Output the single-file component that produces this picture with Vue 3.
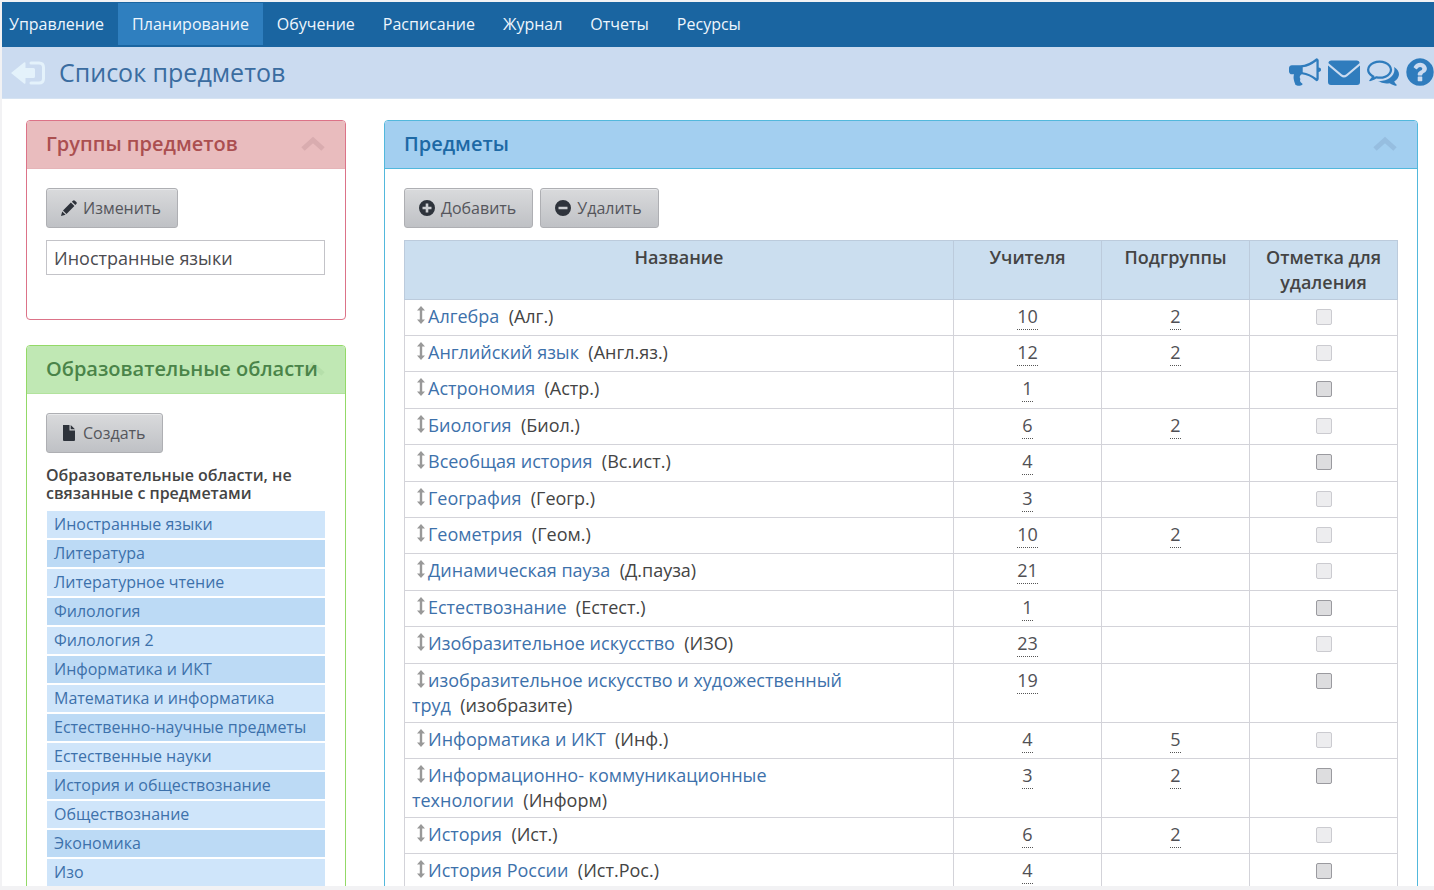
<script setup>
const nav = ['Управление', 'Планирование', 'Обучение', 'Расписание', 'Журнал', 'Отчеты', 'Ресурсы']

const areas = [
  'Иностранные языки',
  'Литература',
  'Литературное чтение',
  'Филология',
  'Филология 2',
  'Информатика и ИКТ',
  'Математика и информатика',
  'Естественно-научные предметы',
  'Естественные науки',
  'История и обществознание',
  'Обществознание',
  'Экономика',
  'Изо',
]

const subjects = [
  { name: 'Алгебра', short: 'Алг.', teachers: 10, groups: 2, free: false },
  { name: 'Английский язык', short: 'Англ.яз.', teachers: 12, groups: 2, free: false },
  { name: 'Астрономия', short: 'Астр.', teachers: 1, free: true },
  { name: 'Биология', short: 'Биол.', teachers: 6, groups: 2, free: false },
  { name: 'Всеобщая история', short: 'Вс.ист.', teachers: 4, free: true },
  { name: 'География', short: 'Геогр.', teachers: 3, free: false },
  { name: 'Геометрия', short: 'Геом.', teachers: 10, groups: 2, free: false },
  { name: 'Динамическая пауза', short: 'Д.пауза', teachers: 21, free: false },
  { name: 'Естествознание', short: 'Естест.', teachers: 1, free: true },
  { name: 'Изобразительное искусство', short: 'ИЗО', teachers: 23, free: false },
  { name: 'изобразительное искусство и художественный труд', short: 'изобразите', teachers: 19, free: true },
  { name: 'Информатика и ИКТ', short: 'Инф.', teachers: 4, groups: 5, free: false },
  { name: 'Информационно- коммуникационные технологии', short: 'Информ', teachers: 3, groups: 2, free: true },
  { name: 'История', short: 'Ист.', teachers: 6, groups: 2, free: false },
  { name: 'История России', short: 'Ист.Рос.', teachers: 4, free: true },
]
</script>

<template>
  <div class="app">
    <div class="page">
      <nav class="nav">
        <a v-for="item in nav" :key="item" href="#" :class="{ active: item === 'Планирование' }">{{ item }}</a>
      </nav>

      <header class="bar">
        <a href="#" class="back" aria-label="Назад">
          <svg viewBox="0 0 34 24" width="34" height="24">
            <path d="M0 12 13 1.500q1.500-1 1.500 1V7h8q1.500 0 1.500 1.500v7q0 1.500-1.500 1.500h-8v4.500q0 2-1.500 1z" fill="currentColor" />
            <path d="M20 2h8q4.500 0 4.500 4.500v11q0 4.500-4.500 4.500h-8" fill="none" stroke="currentColor" stroke-width="3" stroke-linecap="round" />
          </svg>
        </a>
        <h1>Список предметов</h1>
        <div class="tools">
          <a href="#" aria-label="Объявления">
            <svg viewBox="0 0 1792 1792" width="32" height="32"><path fill="currentColor" d="M1664 640q53 0 90.500 37.500t37.500 90.500-37.500 90.500-90.500 37.500v384q0 52-38 90t-90 38q-417-347-812-380-58 19-91 66t-31 100.500 40 92.500q-20 33-23 65.500t6 58 33.500 55 48 50 61.500 50.500q-29 58-111.500 83t-168.500 11.500-132-55.500q-7-23-29.500-87.500t-32-94.500-23-89-15-101 3.500-98.500 22-110.500h-122q-66 0-113-47t-47-113v-192q0-66 47-113t113-47h480q435 0 896-384 52 0 90 38t38 90v384zm-128 604v-954q-394 302-768 343v270q377 42 768 341z" /></svg>
          </a>
          <a href="#" aria-label="Почта">
            <svg viewBox="0 0 32 32" width="32" height="32">
              <path fill="currentColor" d="M3 4.500h26q2.500 0 2.700 2.500L18 18.500q-2 1.500-4 0L.3 7Q.500 4.500 3 4.500z" />
              <path fill="currentColor" d="M0 9.500l12.800 10.800q3.200 2.400 6.400 0L32 9.500V26q0 3-3 3H3q-3 0-3-3z" />
            </svg>
          </a>
          <a href="#" aria-label="Обсуждения">
            <svg viewBox="0 0 1792 1792" width="32" height="32"><path fill="currentColor" d="M704 384q-153 0-286 52t-211.500 141-78.500 191q0 82 53 158t149 132l97 56-35 84q34-20 62-39l44-31 53 10q78 14 153 14 153 0 286-52t211.500-141 78.500-191-78.500-191-211.500-141-286-52zm0-128q191 0 353.500 68.500t256.500 186.500 94 257-94 257-256.500 186.500-353.500 68.500q-86 0-176-16-124 88-278 128-36 9-86 16h-3q-11 0-20.500-8t-11.500-21q-1-3-1-6.500t.5-6.500 2-6l2.500-5 3.500-5.500 4-5 4.500-5 4-4.500q5-6 23-25t26-29.500 22.500-29 25-38.500 20.500-44q-124-72-195-177t-71-224q0-139 94-257t256.500-186.500 353.500-68.500zm822 1169q10 24 20.500 44t25 38.500 22.500 29 26 29.500 23 25q1 1 4 4.500t4.500 5 4 5 3.500 5.500l2.500 5 2 6 .5 6.500-1 6.500q-3 14-13 22t-22 7q-50-7-86-16-154-40-278-128-90 16-176 16-271 0-472-132 58 4 88 4 161 0 309-45t264-129q125-92 192-212t67-254q0-77-23-152 129 71 204 178t75 230q0 120-71 224.500t-195 176.500z" /></svg>
          </a>
          <a href="#" aria-label="Справка">
            <svg viewBox="128 0 1536 1792" width="28" height="32"><path fill="currentColor" d="M1024 1376v-192q0-14-9-23t-23-9h-192q-14 0-23 9t-9 23v192q0 14 9 23t23 9h192q14 0 23-9t9-23zm256-672q0-88-55.500-163t-138.500-116-170-41q-243 0-371 213-15 24 8 42l132 100q7 6 19 6 16 0 25-12 53-68 86-92 34-24 86-24 48 0 85.500 26t37.500 59q0 38-20 61t-68 45q-63 28-115.500 86.500t-52.500 125.500v36q0 14 9 23t23 9h192q14 0 23-9t9-23q0-19 21.500-49.500t54.500-49.500q32-18 49-28.500t46-35 44.500-48 28-60.500 12.500-81zm384 192q0 209-103 385.500t-279.500 279.500-385.500 103-385.500-103-279.500-279.500-103-385.500 103-385.500 279.500-279.500 385.500-103 385.500 103 279.500 279.500 103 385.500z" /></svg>
          </a>
        </div>
      </header>

      <main class="content">
        <div class="side">
          <section class="panel red">
            <header>
              <button class="fold" aria-label="Свернуть группы"><svg viewBox="0 0 24 16" width="24" height="16"><path d="M2 13 12 4l10 9" fill="none" stroke="currentColor" stroke-width="5" /></svg></button>
              <h2>Группы предметов</h2>
            </header>
            <div class="body">
              <button class="btn">
                <svg viewBox="0 0 16 16" width="16" height="16"><path d="M0 16l1.200-4.600 3.400 3.400zM2 10.500 9.900 2.600l3.500 3.500-7.900 7.900zM10.900 1.700l1-1q1-1 2 0l1.400 1.400q1 1 0 2l-1 1z" fill="currentColor" /></svg>
                Изменить
              </button>
              <input class="field" type="text" value="Иностранные языки" aria-label="Группа предметов" />
            </div>
          </section>

          <section class="panel green">
            <header>
              <button class="fold" aria-label="Свернуть области"><svg viewBox="0 0 24 16" width="24" height="16"><path d="M2 13 12 4l10 9" fill="none" stroke="currentColor" stroke-width="5" /></svg></button>
              <h2>Образовательные области</h2>
            </header>
            <div class="body">
              <button class="btn">
                <svg viewBox="0 0 16 16" width="16" height="16"><path d="M2 0h6.500v5.500H14V15q0 1-1 1H3q-1 0-1-1zM9.700 0 14 4.300H9.700z" fill="currentColor" /></svg>
                Создать
              </button>
              <h3>Образовательные области, не связанные с предметами</h3>
              <ul class="areas">
                <li v-for="area in areas" :key="area"><a href="#">{{ area }}</a></li>
              </ul>
            </div>
          </section>
        </div>

        <section class="panel blue">
          <header>
            <button class="fold" aria-label="Свернуть предметы"><svg viewBox="0 0 24 16" width="24" height="16"><path d="M2 13 12 4l10 9" fill="none" stroke="currentColor" stroke-width="5" /></svg></button>
            <h2>Предметы</h2>
          </header>
          <div class="body">
            <div class="actions">
              <button class="btn">
                <svg viewBox="0 0 16 16" width="16" height="16"><path fill-rule="evenodd" d="M8 0a8 8 0 1 1 0 16A8 8 0 0 1 8 0zM6.700 3.500v3.200H3.500v2.600h3.200v3.200h2.600V9.300h3.200V6.700H9.300V3.500z" fill="currentColor" /></svg>
                Добавить
              </button>
              <button class="btn">
                <svg viewBox="0 0 16 16" width="16" height="16"><path fill-rule="evenodd" d="M8 0a8 8 0 1 1 0 16A8 8 0 0 1 8 0zM3.500 6.700v2.600h9V6.700z" fill="currentColor" /></svg>
                Удалить
              </button>
            </div>
            <table>
              <thead>
                <tr>
                  <th class="wide">Название</th>
                  <th>Учителя</th>
                  <th>Подгруппы</th>
                  <th>Отметка для удаления</th>
                </tr>
              </thead>
              <tbody>
                <tr v-for="s in subjects" :key="s.name">
                  <td>
                    <div class="name">
                      <svg class="grip" viewBox="0 0 8 18" width="8" height="18"><path d="M4 0l4 4.500H5.200v9H8L4 18l-4-4.500h2.800v-9H0z" fill="currentColor" /></svg>
                      <a href="#">{{ s.name }}</a>&nbsp; ({{ s.short }})
                    </div>
                  </td>
                  <td class="num"><a href="#">{{ s.teachers }}</a></td>
                  <td class="num"><a v-if="s.groups" href="#">{{ s.groups }}</a></td>
                  <td class="num"><input type="checkbox" :disabled="!s.free" :aria-label="'Удалить: ' + s.name" /></td>
                </tr>
              </tbody>
            </table>
          </div>
        </section>
      </main>
    </div>
  </div>
</template>

<style>
body {
  margin: 0;
  background: #f2f2f4;
}
</style>

<style scoped>
.app {
  box-sizing: border-box;
  height: 100vh;
  padding: 2px 0 4px 2px;
  font-family: "Open Sans", "Noto Sans", sans-serif;
  font-size: 18px;
  color: #444;
}
.app * {
  box-sizing: border-box;
}
.page {
  height: 100%;
  overflow: auto;
  scrollbar-width: none;
  background: #fff;
}
a {
  text-decoration: none;
}
svg {
  display: block;
}
.nav {
  display: flex;
  height: 45px;
  padding: 1px 0 2px;
  background: #1a65a1;
}
.nav a {
  padding: 0 14px;
  font-size: 16px;
  line-height: 42px;
  color: #eef6fd;
}
.nav a:first-child {
  padding-left: 7px;
}
.nav .active {
  background: #2f7fbf;
}
.bar {
  display: flex;
  align-items: center;
  height: 52px;
  padding-left: 9px;
  background: #cbdbf0;
  border-bottom: 1px solid #d6e3f2;
}
.back {
  color: #e4f2fb;
}
h1 {
  margin: 0 0 0 14px;
  padding-bottom: 2px;
  font-size: 25px;
  font-weight: 400;
  line-height: 48px;
  color: #3a6ca0;
}
.tools {
  display: flex;
  gap: 7px;
  margin-left: auto;
  padding-bottom: 2px;
  color: #2f7cbd;
}
.tools a {
  color: inherit;
}
.content {
  display: grid;
  grid-template-columns: 320px 1fr;
  gap: 38px;
  padding: 21px 16px 24px 24px;
}
.side {
  display: flex;
  flex-direction: column;
  gap: 25px;
}
.panel {
  border: 1px solid;
  border-radius: 4px;
}
.panel > header {
  display: grid;
  align-items: center;
  height: 48px;
  padding: 0 20px 2px 19px;
  border-bottom: 1px solid;
  border-radius: 3px 3px 0 0;
}
.panel h2 {
  grid-area: 1 / 1;
  margin: 0;
  font-size: 20px;
  font-weight: 600;
  line-height: 44px;
  white-space: nowrap;
}
.fold {
  grid-area: 1 / 1;
  justify-self: end;
  padding: 0;
  border: 0;
  background: none;
}
.body {
  padding: 19px;
}
.side .body {
  padding-right: 20px;
}
.red {
  min-height: 200px;
  border-color: #dc7388;
}
.red > header {
  background: #e9bcbe;
  border-color: #e6b4b8;
}
.red h2 {
  color: #ab4f50;
}
.red .fold {
  color: #d9acaf;
}
.green {
  border-color: #93d967;
}
.green > header {
  background: #c0e8b4;
  border-color: #b2e39d;
}
.green h2 {
  color: #4a8449;
}
.green .fold {
  color: #b5dfaa;
}
.blue {
  border-color: #52b8dc;
}
.blue > header {
  background: #a3cff0;
  border-color: #52b8dc;
}
.blue h2 {
  color: #1d69a5;
}
.blue .fold {
  color: #96bee0;
}
.btn {
  display: inline-flex;
  align-items: center;
  gap: 6px;
  height: 40px;
  padding: 0 16px 0 14px;
  border: 1px solid #aeafb3;
  border-radius: 3px;
  background: linear-gradient(#d9dadc, #bfc1c5);
  box-shadow: inset 0 1px 0 #e8e9eb;
  font: 16px "Open Sans", "Noto Sans", sans-serif;
  color: #55565c;
}
.btn svg {
  color: #2e333b;
}
.actions {
  display: flex;
  gap: 7px;
}
.field {
  display: block;
  width: 100%;
  height: 35px;
  margin-top: 12px;
  padding: 0 7px;
  border: 1px solid #c3c3c8;
  font: 18px "Open Sans", "Noto Sans", sans-serif;
  color: #4b4b50;
}
h3 {
  margin: 13px 0 9px;
  font-size: 16px;
  font-weight: 600;
  line-height: 18px;
  color: #444;
}
.areas {
  display: flex;
  flex-direction: column;
  gap: 2px;
  margin: 0;
  padding: 0 0 0 1px;
  list-style: none;
}
.areas li {
  padding: 0 7px;
  background: #cfe5fa;
  font-size: 16px;
  line-height: 27px;
  white-space: nowrap;
}
.areas li:nth-child(even) {
  background: #bcdaf5;
}
.areas a {
  color: #3d71ab;
}
table {
  width: 100%;
  margin-top: 12px;
  border-collapse: collapse;
  table-layout: fixed;
  line-height: 25px;
}
th,
td {
  padding: 4px 7px;
  border: 1px solid #d3d3d9;
  vertical-align: top;
}
th {
  width: 148px;
  background: #cbdeef;
  border-color: #bccbdc;
  font-weight: 600;
}
.wide {
  width: auto;
}
tbody tr {
  height: 36px;
}
tbody tr:nth-child(5n + 3),
tbody tr:nth-child(5n + 5) {
  height: 37px;
}
.name {
  max-width: 82%;
}
.name a {
  color: #3d71ab;
}
.grip {
  display: inline-block;
  margin: 0 3px 0 5px;
  vertical-align: -1px;
  color: #999;
}
.num {
  text-align: center;
}
.num a {
  display: inline-block;
  border-bottom: 1px dotted #555;
  color: #505055;
}
input[type="checkbox"] {
  display: block;
  width: 16px;
  height: 16px;
  margin: 5px auto 0;
  appearance: none;
  border: 1px solid #9a9a9f;
  border-radius: 2px;
  background: #dddddf;
}
input[type="checkbox"]:disabled {
  border-color: #cbcbd0;
  background: #ededef;
}
</style>
